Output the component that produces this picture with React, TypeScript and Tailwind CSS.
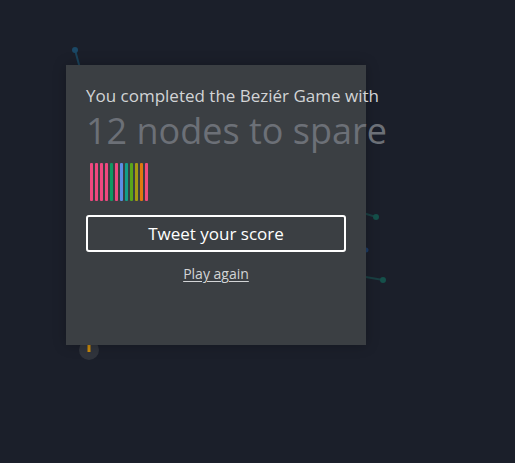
import React from "react"

const bars = [
  "#f0487f",
  "#f0487f",
  "#f0487f",
  "#f0487f",
  "#0f9a62",
  "#f0487f",
  "#5b8fe6",
  "#11a08a",
  "#5aa51a",
  "#a49a12",
  "#e0780e",
  "#f0487f",
]

function Backdrop() {
  return (
    <svg className="absolute inset-0 h-full w-full" viewBox="0 0 515 463">
      <line x1="75" y1="50" x2="81" y2="72" stroke="#1a425a" strokeWidth="2" />
      <circle cx="75" cy="50" r="3" fill="#1b4866" />
      <line x1="360" y1="212" x2="376" y2="217" stroke="#1a3f42" strokeWidth="2" />
      <circle cx="376" cy="217" r="3" fill="#15504a" />
      <circle cx="366" cy="250" r="2.5" fill="#1d3a62" />
      <line x1="360" y1="276" x2="383" y2="280" stroke="#1a3f42" strokeWidth="2" />
      <circle cx="383" cy="280" r="3" fill="#15504a" />
      <circle cx="89" cy="350" r="10" fill="#30343c" />
      <line x1="89" y1="344" x2="89" y2="352" stroke="#c8890b" strokeWidth="3" />
    </svg>
  )
}

export default function App() {
  return (
    <div className="relative h-[463px] w-[515px] overflow-hidden bg-[#1b1f2a] font-['Open_Sans',sans-serif]">
      <Backdrop />

      <div className="relative ml-[66px] mt-[65px] flex h-[280px] w-[300px] flex-col bg-[#3b3f43] px-5 pt-[20px] shadow-[0_0_12px_rgba(0,0,0,0.25)]">
        {/* Result headline */}
        <p className="whitespace-nowrap text-[17px] leading-[22px] text-[#d2d4d6]">
          You completed the Beziér Game with
        </p>
        <p className="mt-[2px] whitespace-nowrap text-[36px] leading-[44px] text-[#6c7077]">
          12 nodes to spare
        </p>

        {/* Spare nodes */}
        <div className="ml-1 mt-[10px] flex h-[38px] gap-[2px]">
          {bars.map((c, i) => (
            <span key={i} className="h-full w-[3px] rounded-[1px]" style={{ backgroundColor: c }} />
          ))}
        </div>

        <button className="mt-[14px] flex h-[37px] w-[260px] items-center justify-center rounded-[3px] border-2 border-white text-[17px] text-white">
          Tweet your score
        </button>

        <a className="mt-[11px] self-center text-[14px] text-[#d2d4d6] underline underline-offset-2">
          Play again
        </a>
      </div>
    </div>
  )
}
